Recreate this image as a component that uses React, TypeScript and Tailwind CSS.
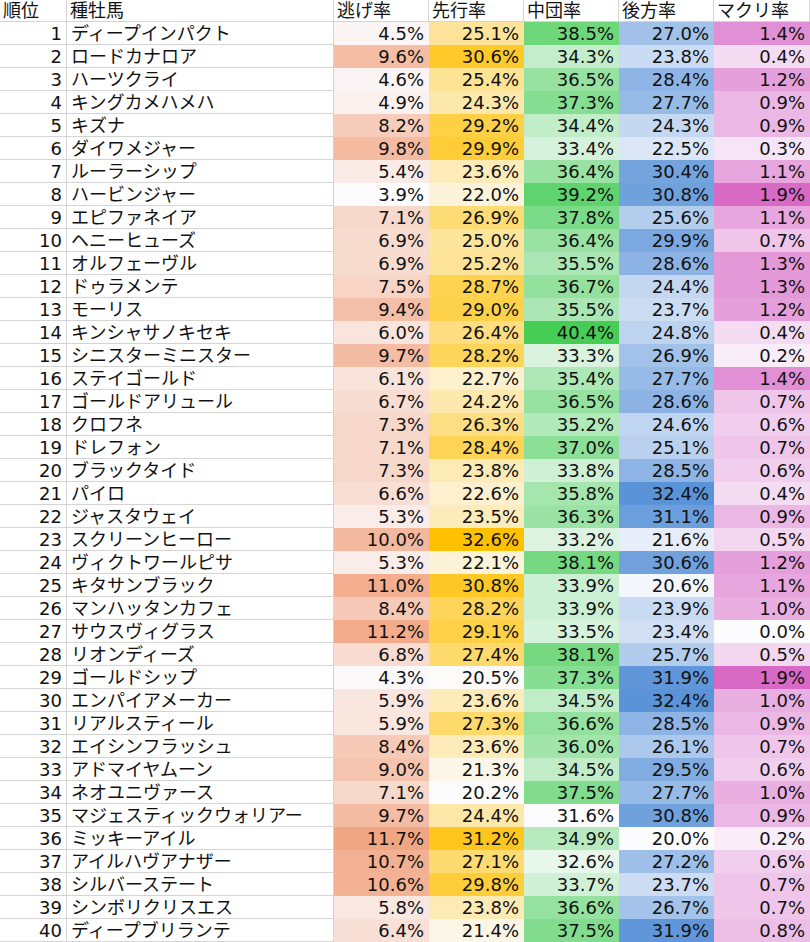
import React from "react";

type Row = [number, string, number, number, number, number, number];

const data: Row[] = [
  [1, "ディープインパクト", 4.5, 25.1, 38.5, 27.0, 1.4],
  [2, "ロードカナロア", 9.6, 30.6, 34.3, 23.8, 0.4],
  [3, "ハーツクライ", 4.6, 25.4, 36.5, 28.4, 1.2],
  [4, "キングカメハメハ", 4.9, 24.3, 37.3, 27.7, 0.9],
  [5, "キズナ", 8.2, 29.2, 34.4, 24.3, 0.9],
  [6, "ダイワメジャー", 9.8, 29.9, 33.4, 22.5, 0.3],
  [7, "ルーラーシップ", 5.4, 23.6, 36.4, 30.4, 1.1],
  [8, "ハービンジャー", 3.9, 22.0, 39.2, 30.8, 1.9],
  [9, "エピファネイア", 7.1, 26.9, 37.8, 25.6, 1.1],
  [10, "ヘニーヒューズ", 6.9, 25.0, 36.4, 29.9, 0.7],
  [11, "オルフェーヴル", 6.9, 25.2, 35.5, 28.6, 1.3],
  [12, "ドゥラメンテ", 7.5, 28.7, 36.7, 24.4, 1.3],
  [13, "モーリス", 9.4, 29.0, 35.5, 23.7, 1.2],
  [14, "キンシャサノキセキ", 6.0, 26.4, 40.4, 24.8, 0.4],
  [15, "シニスターミニスター", 9.7, 28.2, 33.3, 26.9, 0.2],
  [16, "ステイゴールド", 6.1, 22.7, 35.4, 27.7, 1.4],
  [17, "ゴールドアリュール", 6.7, 24.2, 36.5, 28.6, 0.7],
  [18, "クロフネ", 7.3, 26.3, 35.2, 24.6, 0.6],
  [19, "ドレフォン", 7.1, 28.4, 37.0, 25.1, 0.7],
  [20, "ブラックタイド", 7.3, 23.8, 33.8, 28.5, 0.6],
  [21, "パイロ", 6.6, 22.6, 35.8, 32.4, 0.4],
  [22, "ジャスタウェイ", 5.3, 23.5, 36.3, 31.1, 0.9],
  [23, "スクリーンヒーロー", 10.0, 32.6, 33.2, 21.6, 0.5],
  [24, "ヴィクトワールピサ", 5.3, 22.1, 38.1, 30.6, 1.2],
  [25, "キタサンブラック", 11.0, 30.8, 33.9, 20.6, 1.1],
  [26, "マンハッタンカフェ", 8.4, 28.2, 33.9, 23.9, 1.0],
  [27, "サウスヴィグラス", 11.2, 29.1, 33.5, 23.4, 0.0],
  [28, "リオンディーズ", 6.8, 27.4, 38.1, 25.7, 0.5],
  [29, "ゴールドシップ", 4.3, 20.5, 37.3, 31.9, 1.9],
  [30, "エンパイアメーカー", 5.9, 23.6, 34.5, 32.4, 1.0],
  [31, "リアルスティール", 5.9, 27.3, 36.6, 28.5, 0.9],
  [32, "エイシンフラッシュ", 8.4, 23.6, 36.0, 26.1, 0.7],
  [33, "アドマイヤムーン", 9.0, 21.3, 34.5, 29.5, 0.6],
  [34, "ネオユニヴァース", 7.1, 20.2, 37.5, 27.7, 1.0],
  [35, "マジェスティックウォリアー", 9.7, 24.4, 31.6, 30.8, 0.9],
  [36, "ミッキーアイル", 11.7, 31.2, 34.9, 20.0, 0.2],
  [37, "アイルハヴアナザー", 10.7, 27.1, 32.6, 27.2, 0.6],
  [38, "シルバーステート", 10.6, 29.8, 33.7, 23.7, 0.7],
  [39, "シンボリクリスエス", 5.8, 23.8, 36.6, 26.7, 0.7],
  [40, "ディープブリランテ", 6.4, 21.4, 37.5, 31.9, 0.8],
];

const maxColors: [number, number, number][] = [
  [241, 166, 131],
  [255, 192, 0],
  [70, 205, 86],
  [90, 147, 216],
  [216, 106, 198],
];
const minColor: [number, number, number] = [252, 252, 255];

const ranges = [0, 1, 2, 3, 4].map((c) => {
  const vals = data.map((r) => r[2 + c] as number);
  return [Math.min(...vals), Math.max(...vals)];
});

function colorFor(c: number, v: number) {
  const [mn, mx] = ranges[c];
  const t = mx === mn ? 0 : (v - mn) / (mx - mn);
  const mc = maxColors[c];
  const ch = minColor.map((m, i) => Math.round(m + (mc[i] - m) * t));
  return `rgb(${ch[0]},${ch[1]},${ch[2]})`;
}

const headers = ["順位", "種牡馬", "逃げ率", "先行率", "中団率", "後方率", "マクリ率"];

export default function App() {
  return (
    <div className="w-[810px] h-[942px] overflow-hidden bg-white text-[#111] font-['DejaVu_Sans','Noto_Sans_CJK_JP',sans-serif] text-[18px] leading-none">
      <div className="grid grid-cols-[67px_267px_95px_95px_95px_95px_96px]">
        {headers.map((h) => (
          <div
            key={h}
            className="h-[22px] flex items-center pl-[3px] border-r border-b border-[#d4d4d4] whitespace-nowrap overflow-hidden"
          >
            {h}
          </div>
        ))}
        {data.map((r) => (
          <React.Fragment key={r[0]}>
            <div className="h-[23px] flex items-center justify-end pr-[4px] pt-px border-r border-b border-[#d4d4d4]">
              {r[0]}
            </div>
            <div className="h-[23px] flex items-center pl-[4px] pt-px border-r border-b border-[#d4d4d4] whitespace-nowrap overflow-hidden">
              {r[1]}
            </div>
            {[0, 1, 2, 3, 4].map((c) => (
              <div
                key={c}
                className="h-[23px] flex items-center justify-end pr-[5px] pt-px"
                style={{ backgroundColor: colorFor(c, r[2 + c] as number) }}
              >
                {(r[2 + c] as number).toFixed(1)}%
              </div>
            ))}
          </React.Fragment>
        ))}
      </div>
    </div>
  );
}
